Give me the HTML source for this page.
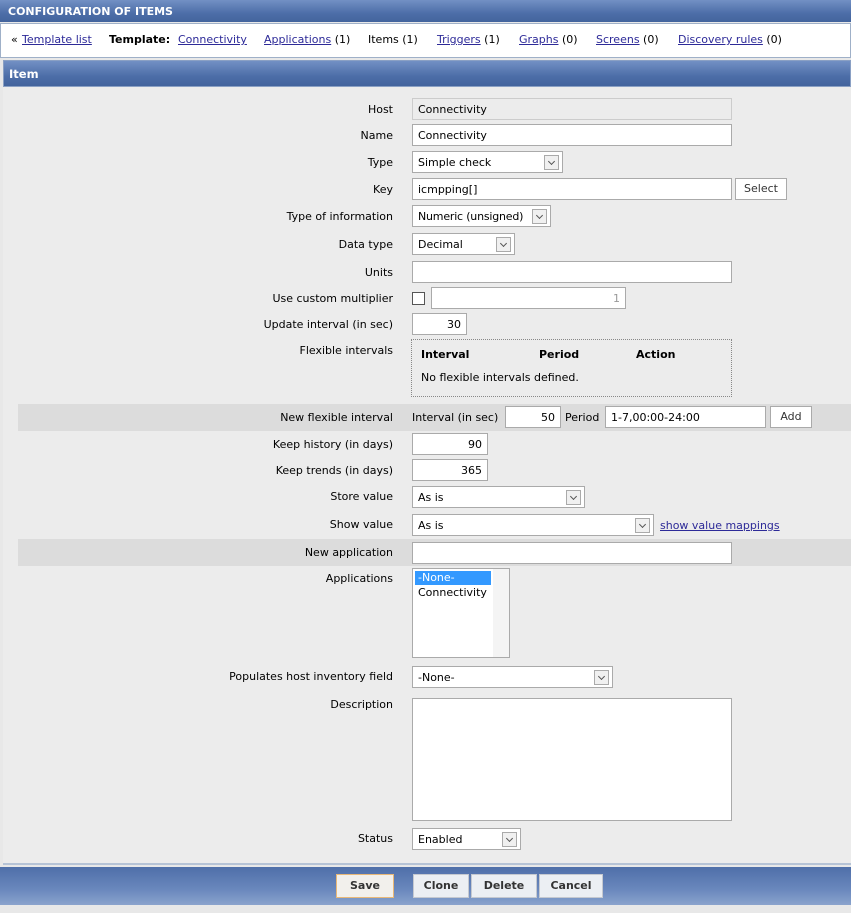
<!DOCTYPE html>
<html><head><style>
*{box-sizing:border-box}
body{margin:0;width:851px;height:913px;background:#e8e8e8;font-family:"DejaVu Sans",Verdana,sans-serif;font-size:11px;color:#000;position:relative;overflow:hidden}
.a{position:absolute;white-space:nowrap}
.bar{background:linear-gradient(#7290c4,#4d6ea8 60%,#43649d);color:#fff;font-weight:bold}
a{color:#2d2a98;text-decoration:underline}
.lbl{position:absolute;right:458px;text-align:right;white-space:nowrap}
.in{position:absolute;background:#fff;border:1px solid #aaa;height:22px;padding:4px 5px;white-space:nowrap}
.sel .ar{position:absolute;right:3px;top:3px;width:15px;height:15px;border:1px solid #aaa;background:#f0f0f0}
.sel .ar:after{content:"";position:absolute;left:4px;top:3px;width:4px;height:4px;border-right:1.5px solid #555;border-bottom:1.5px solid #555;transform:rotate(45deg)}
.btn{position:absolute;background:#eceff3;border:1px solid #c5c9d0;text-align:center;height:24px;line-height:22px;font-weight:bold;color:#333}
.r{text-align:right}
.n{top:33px}
</style></head><body>
<div class="a bar" style="left:0;top:0;width:851px;height:22px;padding:5px 8px;font-size:11px">CONFIGURATION OF ITEMS</div>
<div class="a" style="left:0;top:23px;width:851px;height:35px;background:#fff;border:1px solid #9fb0c8"></div>
<div class="a n" style="left:11px">«</div><a class="a n" style="left:22px">Template list</a>
<b class="a n" style="left:109px">Template:</b><a class="a n" style="left:178px">Connectivity</a>
<div class="a n" style="left:264px"><a>Applications</a> (1)</div>
<div class="a n" style="left:368px">Items (1)</div>
<div class="a n" style="left:437px"><a>Triggers</a> (1)</div>
<div class="a n" style="left:519px"><a>Graphs</a> (0)</div>
<div class="a n" style="left:596px"><a>Screens</a> (0)</div>
<div class="a n" style="left:678px"><a>Discovery rules</a> (0)</div>
<div class="a bar" style="left:3px;top:60px;width:848px;height:27px;padding:6px 5px;font-size:11.5px;border:1px solid #8aa0c4">Item</div>
<div class="a" style="left:3px;top:87px;width:848px;height:778px;background:#ececec;border-bottom:2px solid #b6c3d6"></div>
<div class="a" style="left:18px;top:404px;width:833px;height:27px;background:#dcdcdc"></div>
<div class="a" style="left:18px;top:539px;width:833px;height:27px;background:#dcdcdc"></div>

<div class="lbl" style="top:103px">Host</div><div class="in" style="left:412px;top:98px;width:320px;background:#ececec;border-color:#ccc">Connectivity</div>
<div class="lbl" style="top:129px">Name</div><div class="in" style="left:412px;top:124px;width:320px">Connectivity</div>
<div class="lbl" style="top:156px">Type</div><div class="in sel" style="left:412px;top:151px;width:151px">Simple check<span class="ar"></span></div>
<div class="lbl" style="top:183px">Key</div><div class="in" style="left:412px;top:178px;width:320px">icmpping[]</div><div class="btn" style="left:735px;top:178px;width:52px;height:22px;line-height:20px;font-weight:normal;background:#fff;border-color:#aaa">Select</div>
<div class="lbl" style="top:210px">Type of information</div><div class="in sel" style="left:412px;top:205px;width:139px;letter-spacing:-0.2px">Numeric (unsigned)<span class="ar"></span></div>
<div class="lbl" style="top:238px">Data type</div><div class="in sel" style="left:412px;top:233px;width:103px">Decimal<span class="ar"></span></div>
<div class="lbl" style="top:266px">Units</div><div class="in" style="left:412px;top:261px;width:320px"></div>
<div class="lbl" style="top:292px">Use custom multiplier</div><div class="a" style="left:412px;top:292px;width:13px;height:13px;background:#fff;border:1px solid #555"></div><div class="in r" style="left:431px;top:287px;width:195px;color:#999">1</div>
<div class="lbl" style="top:318px">Update interval (in sec)</div><div class="in r" style="left:412px;top:313px;width:55px">30</div>
<div class="lbl" style="top:344px">Flexible intervals</div>
<div class="a" style="left:411px;top:339px;width:321px;height:58px;border:1px dotted #888">
<b class="a" style="left:9px;top:8px">Interval</b><b class="a" style="left:127px;top:8px">Period</b><b class="a" style="left:224px;top:8px">Action</b>
<div class="a" style="left:9px;top:31px">No flexible intervals defined.</div></div>
<div class="lbl" style="top:411px">New flexible interval</div>
<div class="a" style="left:412px;top:411px">Interval (in sec)</div><div class="in r" style="left:505px;top:406px;width:56px">50</div>
<div class="a" style="left:565px;top:411px">Period</div><div class="in" style="left:605px;top:406px;width:161px">1-7,00:00-24:00</div>
<div class="btn" style="left:770px;top:406px;width:42px;height:22px;line-height:20px;font-weight:normal;background:#fff;border-color:#aaa">Add</div>
<div class="lbl" style="top:438px">Keep history (in days)</div><div class="in r" style="left:412px;top:433px;width:76px">90</div>
<div class="lbl" style="top:464px">Keep trends (in days)</div><div class="in r" style="left:412px;top:459px;width:76px">365</div>
<div class="lbl" style="top:490px">Store value</div><div class="in sel" style="left:412px;top:486px;width:173px">As is<span class="ar"></span></div>
<div class="lbl" style="top:518px">Show value</div><div class="in sel" style="left:412px;top:514px;width:242px">As is<span class="ar"></span></div><a class="a" style="left:660px;top:519px">show value mappings</a>
<div class="lbl" style="top:546px">New application</div><div class="in" style="left:412px;top:542px;width:320px"></div>
<div class="lbl" style="top:572px">Applications</div>
<div class="a" style="left:412px;top:568px;width:98px;height:90px;background:#fff;border:1px solid #aaa">
<div class="a" style="left:2px;top:2px;width:76px;height:14px;background:#3399ff;color:#fff;padding-left:3px;line-height:14px">-None-</div>
<div class="a" style="left:5px;top:17px">Connectivity</div>
<div class="a" style="right:0;top:0;width:16px;height:88px;background:#f4f4f4"></div></div>
<div class="lbl" style="top:670px">Populates host inventory field</div><div class="in sel" style="left:412px;top:666px;width:201px">-None-<span class="ar"></span></div>
<div class="lbl" style="top:698px">Description</div><div class="in" style="left:412px;top:698px;width:320px;height:123px"></div>
<div class="lbl" style="top:832px">Status</div><div class="in sel" style="left:412px;top:828px;width:109px">Enabled<span class="ar"></span></div>

<div class="a bar" style="left:0;top:867px;width:851px;height:38px;background:linear-gradient(#4f6fa9,#6a88bd 60%,#8aa3cc)"></div>
<div class="btn" style="left:336px;top:874px;width:58px;border-color:#e8b878;background:#f2f0ec">Save</div>
<div class="btn" style="left:413px;top:874px;width:56px">Clone</div>
<div class="btn" style="left:471px;top:874px;width:66px">Delete</div>
<div class="btn" style="left:539px;top:874px;width:64px">Cancel</div>
</body></html>
